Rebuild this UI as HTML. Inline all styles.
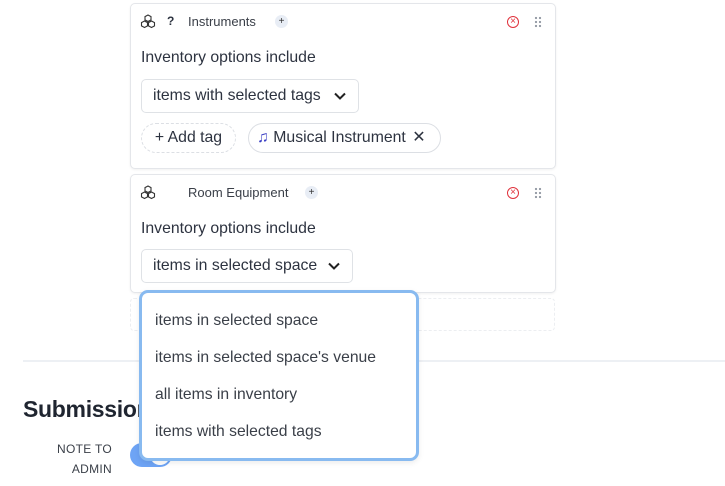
<!DOCTYPE html>
<html><head><style>
*{box-sizing:border-box;margin:0;padding:0}
body{width:725px;height:486px;overflow:hidden;background:#fff;font-family:"Liberation Sans",Helvetica,sans-serif;color:#2d3340;position:relative}
.card{position:absolute;left:130px;width:426px;background:#fff;border:1px solid #e4e6ea;border-radius:5px;box-shadow:0 1px 2px rgba(0,0,0,.06)}
.plus{position:absolute;width:13px;height:13px;border-radius:50%;background:#e8edf5;font-size:10px;line-height:13px;text-align:center;color:#333}
.x{position:absolute;right:36px;width:12px;height:12px;border:1.4px solid #e0323c;border-radius:50%;color:#e0323c;font-size:10px;line-height:9px;text-align:center}
.grip{position:absolute;right:13px;width:8px;height:12px;background-image:radial-gradient(circle,#9aa0aa 1.1px,transparent 1.3px);background-size:4px 4px}
.lbl{position:absolute;left:10px;font-size:15.8px;color:#2d3340}
.sel{position:absolute;left:10px;height:34px;border:1px solid #dfe2e6;border-radius:5px;font-size:15.8px;padding:0 11px;line-height:32px;color:#2d3340}
.sel svg{position:absolute;right:11px;top:11px}
.opt{position:absolute;left:13px;font-size:15.7px;color:#3a3f48}
.h{position:absolute;left:57px;top:10px;font-size:13px;color:#3a3f48}
</style></head><body>

<div class="card" style="top:3px;height:166px">
  <svg style="position:absolute;left:9px;top:10px" width="16" height="15" viewBox="0 0 16 15" fill="none" stroke="#333" stroke-width="1.1"><path d="M8 1l3 1.6v3.3L8 7.5 5 5.9V2.6z M4.5 7l3 1.6v3.3L4.5 13.5 1.5 11.9V8.6z M11.5 7l3 1.6v3.3l-3 1.6-3-1.6V8.6z"/></svg>
  <div style="position:absolute;left:36px;top:10px;font-size:12px;font-weight:bold">?</div>
  <div class="h">Instruments</div>
  <div class="plus" style="left:144px;top:11px">+</div>
  <div class="x" style="top:12px">×</div>
  <div class="grip" style="top:12px"></div>
  <div class="lbl" style="top:45px">Inventory options include</div>
  <div class="sel" style="top:75px;width:218px">items with selected tags<svg width="14" height="10" viewBox="0 0 14 10"><path d="M2 2.5l5 5 5-5" stroke="#222" stroke-width="2" fill="none"/></svg></div>
  <div style="position:absolute;left:10px;top:119px;width:95px;height:30px;border:1px dashed #dcdfe4;border-radius:15px;font-size:15.8px;line-height:28px;text-align:center">+ Add tag</div>
  <div style="position:absolute;left:117px;top:119px;width:193px;height:30px;border:1px solid #dcdfe4;border-radius:15px;font-size:15.8px;line-height:28px;padding-left:8px;white-space:nowrap"><span style="color:#3b3fc4">♫</span> Musical Instrument <span style="margin-left:2px">✕</span></div>
</div>

<div class="card" style="top:174px;height:119px">
  <svg style="position:absolute;left:9px;top:10px" width="16" height="15" viewBox="0 0 16 15" fill="none" stroke="#333" stroke-width="1.1"><path d="M8 1l3 1.6v3.3L8 7.5 5 5.9V2.6z M4.5 7l3 1.6v3.3L4.5 13.5 1.5 11.9V8.6z M11.5 7l3 1.6v3.3l-3 1.6-3-1.6V8.6z"/></svg>
  <div class="h">Room Equipment</div>
  <div class="plus" style="left:174px;top:11px">+</div>
  <div class="x" style="top:12px">×</div>
  <div class="grip" style="top:12px"></div>
  <div class="lbl" style="top:45px">Inventory options include</div>
  <div class="sel" style="top:74px;width:212px">items in selected space<svg width="14" height="10" viewBox="0 0 14 10"><path d="M2 2.5l5 5 5-5" stroke="#222" stroke-width="2" fill="none"/></svg></div>
</div>

<div style="position:absolute;left:130px;top:298px;width:425px;height:33px;border:1px dashed #eceef1;border-radius:4px"></div>
<div style="position:absolute;left:23px;top:360px;width:702px;height:2px;background:#edf0f4"></div>

<div style="position:absolute;left:23px;top:396px;font-size:23px;font-weight:bold;color:#1f2530;letter-spacing:-0.3px">Submission</div>
<div style="position:absolute;left:40px;top:439px;width:72px;text-align:right;font-size:12px;line-height:20px;color:#3a3f48;letter-spacing:0.3px">NOTE TO<br>ADMIN</div>
<div style="position:absolute;left:130px;top:443px;width:42px;height:24px;border-radius:12px;background:#6ea4f5"></div>
<div style="position:absolute;left:150px;top:445px;width:20px;height:20px;border-radius:50%;background:#fff"></div>

<div style="position:absolute;left:139px;top:290px;width:280px;height:171px;background:#fff;border:3px solid #88baf0;border-radius:9px;box-shadow:0 2px 6px rgba(0,0,0,.08)">
  <div class="opt" style="top:19px">items in selected space</div>
  <div class="opt" style="top:56px">items in selected space's venue</div>
  <div class="opt" style="top:93px">all items in inventory</div>
  <div class="opt" style="top:130px">items with selected tags</div>
</div>
</body></html>
